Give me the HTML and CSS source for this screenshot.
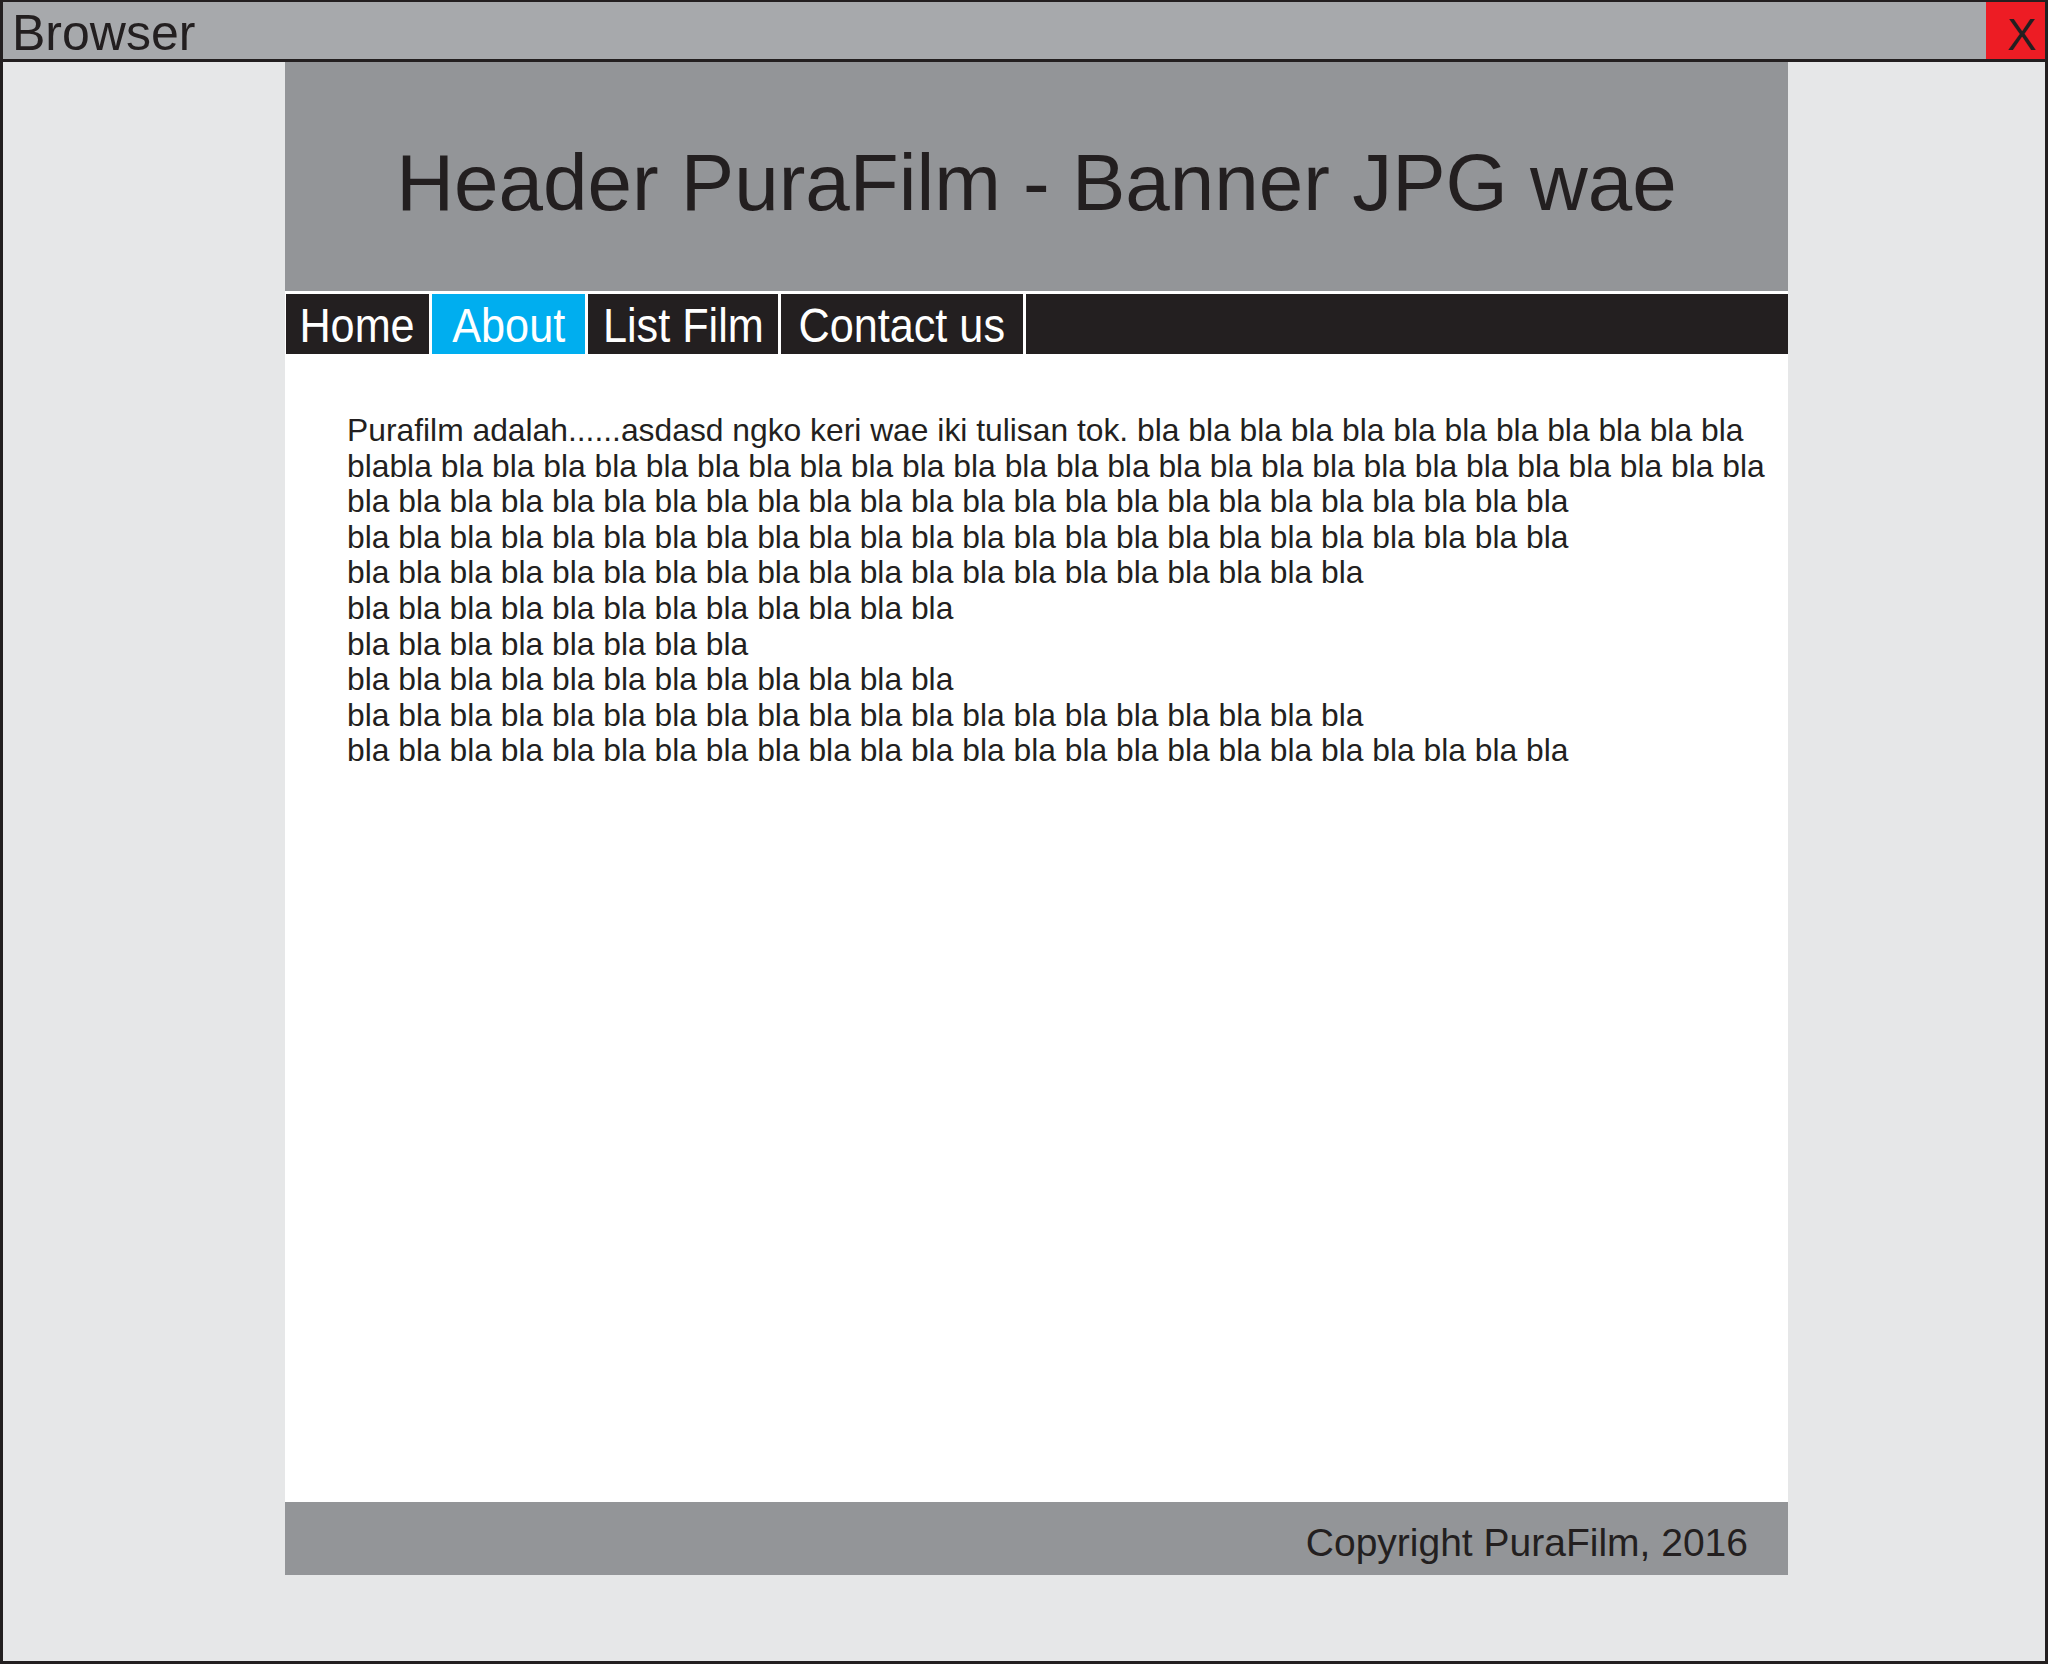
FILE: index.html
```html
<!DOCTYPE html>
<html lang="id">
<head>
<meta charset="utf-8">
<title>PuraFilm - About</title>
<link rel="stylesheet" href="styles.css">
</head>
<body>
<div class="window">
  <div class="titlebar">
    <div class="titlebar-label">Browser</div>
    <div class="titlebar-close">X</div>
  </div>
  <div class="viewport">
    <div class="page">
      <header class="banner">
        <h1 class="banner-title">Header PuraFilm - Banner JPG wae</h1>
      </header>
      <nav class="menu">
        <a class="menu-item menu-home"><span class="menu-label">Home</span></a>
        <a class="menu-item menu-about is-active"><span class="menu-label">About</span></a>
        <a class="menu-item menu-list"><span class="menu-label">List Film</span></a>
        <a class="menu-item menu-contact"><span class="menu-label">Contact us</span></a>
        <span class="menu-fill"></span>
      </nav>
      <main class="content">
        <p class="content-text">Purafilm adalah......asdasd ngko keri wae iki tulisan tok. bla bla bla bla bla bla bla bla bla bla bla bla<br>blabla bla bla bla bla bla bla bla bla bla bla bla bla bla bla bla bla bla bla bla bla bla bla bla bla bla bla<br>bla bla bla bla bla bla bla bla bla bla bla bla bla bla bla bla bla bla bla bla bla bla bla bla<br>bla bla bla bla bla bla bla bla bla bla bla bla bla bla bla bla bla bla bla bla bla bla bla bla<br>bla bla bla bla bla bla bla bla bla bla bla bla bla bla bla bla bla bla bla bla<br>bla bla bla bla bla bla bla bla bla bla bla bla<br>bla bla bla bla bla bla bla bla<br>bla bla bla bla bla bla bla bla bla bla bla bla<br>bla bla bla bla bla bla bla bla bla bla bla bla bla bla bla bla bla bla bla bla<br>bla bla bla bla bla bla bla bla bla bla bla bla bla bla bla bla bla bla bla bla bla bla bla bla</p>
      </main>
      <footer class="footer">Copyright PuraFilm, 2016</footer>
    </div>
  </div>
</div>
</body>
</html>
```

FILE: styles.css
```css
html, body {
  margin: 0;
  padding: 0;
}

body {
  font-family: "Liberation Sans", Arial, sans-serif;
  color: #231f20;
}

.window {
  box-sizing: border-box;
  width: 2048px;
  height: 1664px;
  border: 3px solid #231f20;
  border-top-width: 2px;
  display: flex;
  flex-direction: column;
  background: #e6e7e8;
}

.titlebar {
  display: flex;
  justify-content: space-between;
  height: 57px;
  background: #a7a9ac;
  border-bottom: 3px solid #231f20;
}

.titlebar-label {
  font-size: 50px;
  line-height: 50px;
  padding: 6px 0 0 9px;
}

.titlebar-close {
  box-sizing: border-box;
  width: 59px;
  background: #ed1c24;
  font-size: 44px;
  line-height: 46px;
  padding: 10px 0 0 21px;
}

.viewport {
  flex: 1;
  padding: 0 257px 0 282px;
  display: flex;
  flex-direction: column;
}

.page {
  height: 1513px;
  background: #ffffff;
  display: flex;
  flex-direction: column;
}

.banner {
  height: 229px;
  background: #939598;
  display: flex;
  align-items: center;
  justify-content: center;
}

.banner-title {
  margin: 0;
  padding-top: 13px;
  font-size: 80px;
  font-weight: normal;
  line-height: 1;
  color: #231f20;
}

.menu {
  display: flex;
  gap: 3px;
  margin-top: 3px;
  padding-left: 1px;
  height: 60px;
}

.menu-item {
  box-sizing: border-box;
  height: 60px;
  display: flex;
  justify-content: center;
  background: #231f20;
  color: #ffffff;
  font-size: 48px;
  line-height: 57px;
  padding-top: 3px;
  text-decoration: none;
}

.menu-label {
  display: inline-block;
  white-space: nowrap;
  transform: scaleX(0.9);
  transform-origin: center;
}

.menu-home { width: 143px; }
.menu-about { width: 153px; }
.menu-list { width: 190px; }
.menu-contact { width: 242px; }

.menu-item.is-active {
  background: #00aeef;
}

.menu-fill {
  flex: 1;
  background: #231f20;
}

.content {
  flex: 1;
  padding: 59px 0 0 62px;
}

.content-text {
  margin: 0;
  font-size: 31.8px;
  line-height: 35.6px;
  white-space: nowrap;
  color: #231f20;
}

.footer {
  height: 73px;
  box-sizing: border-box;
  background: #939598;
  font-size: 39px;
  line-height: 64px;
  padding: 9px 40px 0 0;
  text-align: right;
  color: #231f20;
}
```
